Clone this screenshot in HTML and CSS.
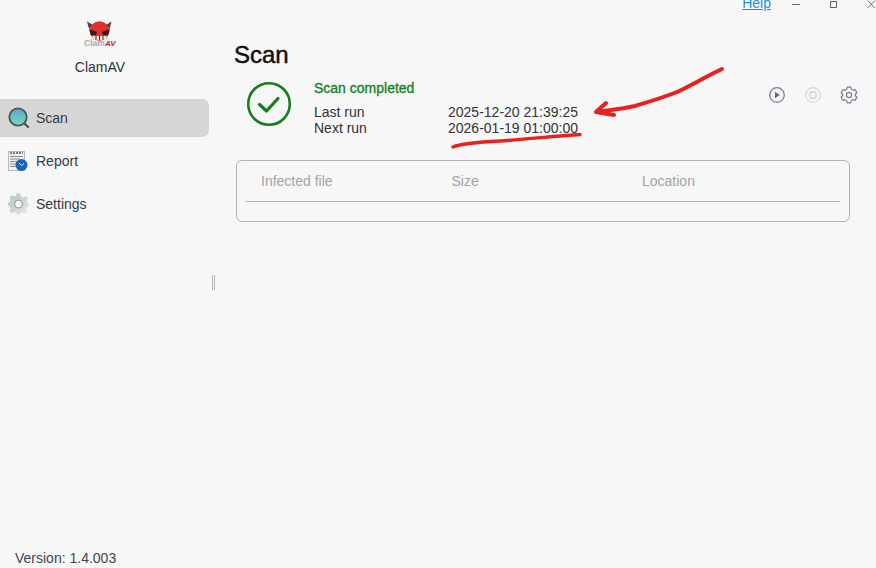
FILE: index.html
```html
<!DOCTYPE html>
<html lang="en">
<head>
<meta charset="utf-8">
<title>ClamAV</title>
<link rel="stylesheet" href="styles.css">
</head>
<body>
<div class="app">
  <aside class="sidebar">
    <div class="brand">
      <svg class="logo" width="32" height="26" viewBox="0 0 32 26">
        <path d="M3 0.500 L5 8 L9 4 Z M27.500 0.500 L25.500 8 L22 4 Z" fill="#5b3a3a"/>
        <circle cx="15.500" cy="10" r="9.800" fill="#e0302c"/>
        <path d="M5 8 L13 11 L12 14 L7 14 Z M26 8 L18 11 L19 14 L24 14 Z" fill="#3a1a1a"/>
        <path d="M8 15 H23 L21 19 H10 Z" fill="#e9dcdc"/>
        <path d="M12 15 V19 M15.500 15 V19 M19 15 V19" stroke="#5a2a2a" stroke-width="1"/>
        <text class="logo-clam" x="0" y="24.500">Clam</text>
        <text class="logo-av" x="21" y="24.500">AV</text>
      </svg>
      <div class="brand-name">ClamAV</div>
    </div>
    <nav class="nav">
      <a class="nav-item active">
        <svg class="nav-icon" width="22" height="22" viewBox="0 0 22 22">
          <defs><linearGradient id="lens" x1="0" y1="0" x2="0" y2="1"><stop offset="0" stop-color="#5ea6c4"/><stop offset="1" stop-color="#6edcbc"/></linearGradient></defs>
          <path d="M16 16 L20 20" stroke="#4a5356" stroke-width="2.400" stroke-linecap="round"/>
          <circle cx="10" cy="10" r="8.700" fill="url(#lens)" stroke="#4a5356" stroke-width="1.800"/>
        </svg>
        <span>Scan</span>
      </a>
      <a class="nav-item">
        <svg class="nav-icon" width="22" height="22" viewBox="0 0 22 22">
          <rect x="0.500" y="1.500" width="16" height="19" fill="#f1f1f1" stroke="#b9b9b9"/>
          <path d="M2 3 H15" stroke="#555" stroke-width="1.500" stroke-dasharray="2 1"/>
          <path d="M2 6.500 H15 M2 9 H12 M2 11.500 H10 M2 14 H8 M2 16.500 H8" stroke="#8a8a8a" stroke-width="1"/>
          <circle cx="13.500" cy="15" r="6" fill="#1565c0"/>
          <path d="M11 13 L13.500 15.500 L16 13.500" stroke="#cfe3f8" stroke-width="1" fill="none"/>
        </svg>
        <span>Report</span>
      </a>
      <a class="nav-item">
        <svg class="nav-icon" width="22" height="22" viewBox="0 0 22 22">
          <defs><linearGradient id="gear" x1="0" y1="0" x2="1" y2="1"><stop offset="0" stop-color="#b4c1c3"/><stop offset="1" stop-color="#e6ebeb"/></linearGradient></defs>
          <path fill="url(#gear)" fill-rule="evenodd" d="M8.500 0.500 H12 L12.700 3.400 L15.200 4.400 L17.700 2.900 L20 5.400 L18.500 7.800 L19.500 10 L21 10.500 V13 L18.800 13.800 L18 16 L19.500 18.300 L17.200 20.600 L14.800 19.200 L12.500 20 L12 21.500 H9 L8.300 19.800 L6 19 L3.500 20.400 L1.300 18 L2.800 15.700 L1.800 13.300 L0 12.700 V9.700 L2 9 L2.800 6.800 L1.500 4.500 L3.800 2.300 L6.200 3.600 L8 2.900 Z M10.500 7.500 A3.500 3.500 0 1 0 10.501 14.500 A3.500 3.500 0 1 0 10.500 7.500 Z"/>
          <circle cx="10.500" cy="11" r="4" fill="none" stroke="#8f9a9c" stroke-width="1"/>
        </svg>
        <span>Settings</span>
      </a>
    </nav>
    <div class="version">Version: 1.4.003</div>
  </aside>
  <div class="splitter"><i></i></div>
  <main class="main">
    <div class="titlebar">
      <a class="help">Help</a>
      <span class="win-btn"><svg width="9" height="9" viewBox="0 0 9 9"><path d="M0 4.500 H8" stroke="#666"/></svg></span>
      <span class="win-btn"><svg width="9" height="9" viewBox="0 0 9 9"><rect x="1.500" y="1.500" width="6" height="6" fill="none" stroke="#666"/></svg></span>
      <span class="win-btn"><svg width="9" height="9" viewBox="0 0 9 9"><path d="M0.500 0.500 L8 8 M8 0.500 L0.500 8" stroke="#777"/></svg></span>
    </div>
    <h1 class="title">Scan</h1>
    <section class="status">
      <svg class="status-icon" width="46" height="46" viewBox="0 0 46 46">
        <circle cx="23" cy="23" r="20.800" fill="none" stroke="#12801a" stroke-width="2.600"/>
        <path d="M13.500 23.500 L20.500 30 L32 17.500" fill="none" stroke="#12801a" stroke-width="3.200" stroke-linecap="round" stroke-linejoin="round"/>
      </svg>
      <div class="status-text">
        <div class="status-head">Scan completed</div>
        <div class="run-row"><span class="run-label">Last run</span><span>2025-12-20 21:39:25</span></div>
        <div class="run-row"><span class="run-label">Next run</span><span>2026-01-19 01:00:00</span></div>
      </div>
      <div class="actions">
        <svg width="18" height="18" viewBox="0 0 18 18"><circle cx="9" cy="9" r="7.300" fill="none" stroke="#6f8196" stroke-width="1.300"/><path d="M7 5.800 L11.800 9 L7 12.200 Z" fill="#6a6a6a"/></svg>
        <svg width="18" height="18" viewBox="0 0 18 18"><circle cx="9" cy="9" r="7.300" fill="none" stroke="#d8d8d8" stroke-width="1.300"/><rect x="6" y="6" width="6" height="6" rx="1" fill="none" stroke="#cfcfcf" stroke-width="1.300"/></svg>
        <svg width="18" height="18" viewBox="0 0 18 18"><path fill="none" stroke="#6f8196" stroke-width="1.200" stroke-linejoin="round" d="M7.300 1.200 H10.700 L11.300 3.300 L13.100 4.300 L15.200 3.700 L16.900 6.700 L15.300 8.200 V9.800 L16.900 11.300 L15.200 14.300 L13.100 13.700 L11.300 14.700 L10.700 16.800 H7.300 L6.700 14.700 L4.900 13.700 L2.800 14.300 L1.100 11.300 L2.700 9.800 V8.200 L1.100 6.700 L2.800 3.700 L4.900 4.300 L6.700 3.300 Z"/><circle cx="9" cy="9" r="2.600" fill="none" stroke="#6f8196" stroke-width="1.200"/></svg>
      </div>
    </section>
    <section class="results">
      <div class="results-head">
        <span>Infected file</span>
        <span>Size</span>
        <span>Location</span>
      </div>
    </section>
  </main>
</div>
<svg class="annotation" width="876" height="568" viewBox="0 0 876 568">
  <path d="M722 69 C705 77 690 86 677 92 C662 98 648 102 635 106 C622 109 610 110 596 112 M606 103 L596 112 L614 115" fill="none" stroke="#e8211f" stroke-width="4" stroke-linecap="round" stroke-linejoin="round"/>
  <path d="M453 147 C462 143 480 142 500 141 C530 139 555 136 580 134.500" fill="none" stroke="#e8211f" stroke-width="3.400" stroke-linecap="round"/>
</svg>
</body>
</html>
```

FILE: styles.css
```css
* { box-sizing: border-box; }

html, body {
  margin: 0;
  height: 100%;
  overflow: hidden;
}

body {
  background: #f7f7f7;
  color: #333;
  font-family: "Liberation Sans", Arial, sans-serif;
  font-size: 14px;
  line-height: 16px;
  position: relative;
}

.app {
  display: flex;
  height: 568px;
}

.sidebar {
  width: 209px;
  flex: none;
  display: flex;
  flex-direction: column;
}

.brand {
  display: flex;
  flex-direction: column;
  align-items: center;
  padding: 21px 9px 0 0;
  gap: 12px;
}

.logo { display: block; }
.logo-clam { font: 700 8.500px "Liberation Sans", sans-serif; fill: #a9a9a9; }
.logo-av { font: italic 700 8px "Liberation Sans", sans-serif; fill: #b8262a; }

.brand-name { color: #2b3440; }

.nav {
  margin-top: 24px;
  display: flex;
  flex-direction: column;
  gap: 5px;
}

.nav-item {
  height: 38px;
  display: flex;
  align-items: center;
  gap: 6px;
  padding-left: 8px;
  border-radius: 0 7px 7px 0;
  color: #333a44;
}

.nav-item.active { background: #d6d6d6; }

.nav-icon { flex: none; }

.version {
  margin-top: auto;
  padding: 0 0 2px 15px;
  color: #3d4450;
}

.splitter {
  width: 25px;
  flex: none;
  display: flex;
  justify-content: center;
  padding-top: 275px;
  padding-right: 17px;
}

.splitter i {
  display: block;
  width: 3px;
  height: 15px;
  border-left: 1px solid #b5b5b5;
  border-right: 1px solid #b5b5b5;
}

.main {
  flex: 1;
  min-width: 0;
  display: flex;
  flex-direction: column;
}

.titlebar {
  height: 10px;
  display: flex;
  justify-content: flex-end;
  align-items: flex-start;
}

.help {
  margin-top: -5px;
  margin-right: 6.500px;
  color: #1a8cf0;
  text-decoration: underline;
}

.win-btn {
  width: 37px;
  height: 9px;
  display: flex;
  justify-content: center;
}

.win-btn:last-child { width: 10px; margin-left: 14.500px; }

.title {
  margin: 29px 0 0;
  font-size: 24px;
  line-height: 32px;
  font-weight: 400;
  color: #111;
  -webkit-text-stroke: 0.5px #111;
}

.status {
  display: flex;
  align-items: flex-start;
  margin-top: 8px;
  padding: 0 18px 0 12px;
}

.status-icon {
  flex: none;
  margin-top: 2px;
}

.status-text {
  margin-left: 22px;
  padding-top: 1px;
}

.status-head {
  color: #10801a;
  -webkit-text-stroke: 0.3px #10801a;
  margin-bottom: 8px;
}

.run-row {
  display: flex;
  color: #333;
}

.run-label { width: 134px; }

.actions {
  margin-left: auto;
  display: flex;
  gap: 18px;
  margin-top: 7px;
}

.results {
  margin: 24px 26px 0 2px;
  height: 62px;
  border: 1px solid #b3b3b3;
  border-radius: 6px;
  padding: 0 9px;
}

.results-head {
  height: 41px;
  display: grid;
  grid-template-columns: 190.500px 190.500px 1fr;
  align-items: center;
  padding-left: 15px;
  padding-bottom: 1px;
  border-bottom: 1px solid #b3b3b3;
  color: #a3a3a3;
}

.annotation {
  position: absolute;
  left: 0;
  top: 0;
  pointer-events: none;
}
```
